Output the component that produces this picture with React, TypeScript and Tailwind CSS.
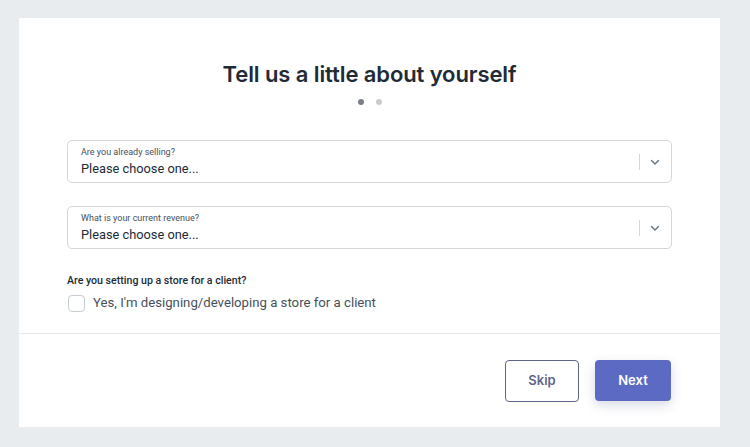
import React from "react";

const BODY = "Roboto, 'Liberation Sans', Arial, sans-serif";

function Chevron() {
  return (
    <svg width="12" height="12" viewBox="0 0 12 12" fill="none">
      <path d="M2.5 4.5L6 8l3.5-3.5" stroke="#637381" strokeWidth="1.4" strokeLinecap="round" strokeLinejoin="round" />
    </svg>
  );
}

function Select({ label }: { label: string }) {
  return (
    <div className="flex h-[43px] items-center rounded-[5px] border border-[#d3d6da] bg-white pl-[13px] pr-[10px]" style={{ fontFamily: BODY }}>
      <div className="flex flex-1 flex-col">
        <span className="text-[9px] leading-[12px] text-[#454f5b]">{label}</span>
        <span className="mt-[3px] text-[12.8px] leading-[16px] text-[#212b36]">Please choose one...</span>
      </div>
      <div className="h-[16px] w-px bg-[#d3d6da]" />
      <div className="ml-[9px] flex w-[12px] items-center justify-center">
        <Chevron />
      </div>
    </div>
  );
}

export default function App() {
  return (
    <div className="h-[447px] w-[750px] overflow-hidden bg-[#e9ecef] pt-[18px]" style={{ fontFamily: "Inter, 'Liberation Sans', Arial, sans-serif" }}>
      <div className="ml-[19px] flex h-[409px] w-[701px] flex-col bg-white">
        <div className="flex h-[316px] flex-col border-b border-[#e6e8eb] px-[48px] pt-[42px]">
          <h1 className="text-center text-[22px] font-semibold leading-[28px] tracking-[-0.1px] text-[#212b36]">Tell us a little about yourself</h1>
          <div className="mt-[11px] flex justify-center gap-[12px]">
            <span className="h-[6px] w-[6px] rounded-full bg-[#7a7f85]" />
            <span className="h-[6px] w-[6px] rounded-full bg-[#c9cccf]" />
          </div>
          <div className="mt-[35px] flex flex-col gap-[23px]">
            <Select label="Are you already selling?" />
            <Select label="What is your current revenue?" />
          </div>
          <div className="mt-[25px] text-[10.6px] font-medium leading-[14px] text-[#212b36]" style={{ fontFamily: BODY }}>Are you setting up a store for a client?</div>
          <label className="mt-[6px] flex items-center" style={{ fontFamily: BODY }}>
            <span className="ml-px h-[17px] w-[17px] rounded-[4px] border border-[#c4cdd5] bg-white" />
            <span className="ml-[8px] text-[13.2px] leading-[18px] text-[#454f5b]">Yes, I'm designing/developing a store for a client</span>
          </label>
        </div>
        <div className="flex flex-1 items-center justify-end gap-[16px] pr-[49px]">
          <button className="flex h-[42px] w-[74px] items-center justify-center rounded-[4px] border-[1.5px] border-[#5f6589] bg-white text-[13px] font-semibold text-[#5f6589]">Skip</button>
          <button className="flex h-[41px] w-[76px] items-center justify-center rounded-[4px] bg-[#5c6ac4] text-[13px] font-semibold text-white shadow-[0_4px_12px_rgba(60,70,120,0.2)]">Next</button>
        </div>
      </div>
    </div>
  );
}
